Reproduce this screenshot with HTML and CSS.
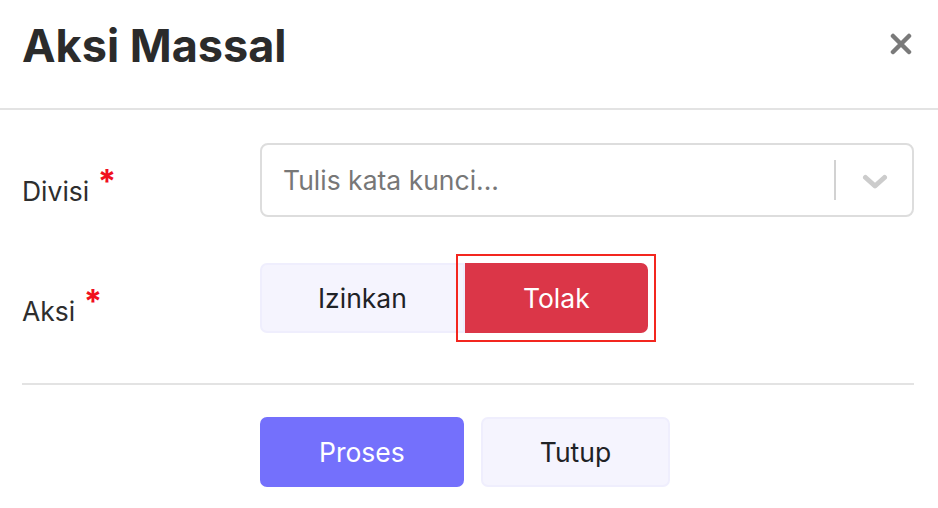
FILE: index.html
```html
<!DOCTYPE html>
<html lang="id">
<head>
<meta charset="utf-8">
<title>Aksi Massal</title>
<link rel="stylesheet" href="styles.css">
</head>
<body>
<div class="modal">
  <header class="modal-header">
    <h1 class="modal-title">Aksi Massal</h1>
    <button class="close" aria-label="Tutup">
      <svg width="22" height="22" viewBox="0 0 22 22"><path d="M3 3L19 19M19 3L3 19" stroke="#7a7a7a" stroke-width="4.5" stroke-linecap="round" fill="none"/></svg>
    </button>
  </header>
  <div class="modal-body">
    <div class="form-row">
      <label class="label">Divisi <span class="req">*</span></label>
      <div class="select">
        <span class="placeholder">Tulis kata kunci...</span>
        <span class="sep"></span>
        <span class="chev">
          <svg width="26" height="16" viewBox="0 0 26 16"><path d="M3.5 3.5L13 12L22.5 3.5" stroke="#cccccc" stroke-width="5" stroke-linecap="round" stroke-linejoin="round" fill="none"/></svg>
        </span>
      </div>
    </div>
    <div class="form-row row-aksi">
      <label class="label">Aksi <span class="req">*</span></label>
      <div class="btn-group">
        <button class="btn btn-light grp-left">Izinkan</button>
        <button class="btn btn-danger grp-right focused">Tolak</button>
      </div>
    </div>
    <div class="divider"></div>
    <div class="footer">
      <button class="btn btn-primary">Proses</button>
      <button class="btn btn-light">Tutup</button>
    </div>
  </div>
</div>
</body>
</html>
```

FILE: styles.css
```css
* { box-sizing: border-box; }
html, body { margin: 0; padding: 0; background: #fff; }
body { font-family: Inter, "Noto Sans", "Liberation Sans", sans-serif; color: #2b2b2b; }

.modal { width: 938px; }

.modal-header {
  height: 110px;
  display: flex;
  align-items: flex-start;
  justify-content: space-between;
  padding: 0 22px;
  border-bottom: 2px solid #e3e3e3;
}
.modal-title {
  margin: 18px 0 0 0;
  font-size: 45px;
  font-weight: 700;
  line-height: 56px;
  color: #2b2b2b;
}
.close {
  margin: 33px 4px 0 0;
  padding: 0;
  border: 0;
  background: none;
  width: 22px;
  height: 22px;
  display: flex;
}

.modal-body { padding: 33px 24px 0 22px; }

.form-row { display: flex; align-items: flex-start; }
.row-aksi { margin-top: 46px; }

.label {
  width: 238px;
  flex: none;
  font-size: 26.5px;
  line-height: 40px;
  padding-top: 28px;
  color: #2e2e2e;
}
.req {
  color: #f0101e;
  font-weight: 700;
  font-size: 33px;
  line-height: 0;
  vertical-align: 8px;
  margin-left: 1px;
}

.select {
  flex: 1;
  height: 74px;
  border: 2px solid #dddddd;
  border-radius: 8px;
  display: flex;
  align-items: center;
  padding-left: 21px;
}
.placeholder {
  flex: 1;
  font-size: 26.5px;
  color: #777777;
}
.sep {
  width: 2px;
  height: 40px;
  background: #d2d2d2;
  margin-right: 2px;
}
.chev {
  width: 74px;
  display: flex;
  justify-content: center;
  padding-top: 3px;
}

.btn-group { display: flex; }

.btn {
  font-family: inherit;
  font-size: 26.5px;
  height: 70px;
  padding: 0 57px;
  border-radius: 7px;
  border: 2px solid transparent;
  cursor: pointer;
}
.btn-group .btn { padding: 0 56px; }
.btn-light {
  background: #f5f4fe;
  border-color: #efeefd;
  color: #1f2226;
}
.btn-danger {
  background: #db3648;
  border-color: #db3648;
  color: #fff;
}
.btn-primary {
  background: #7470fc;
  border-color: #7470fc;
  color: #fff;
}
.grp-left { border-top-right-radius: 0; border-bottom-right-radius: 0; }
.grp-right { border-top-left-radius: 0; border-bottom-left-radius: 0; }
.focused { position: relative; }
.focused::after {
  content: "";
  position: absolute;
  top: -11px;
  bottom: -11px;
  left: -11px;
  right: -10px;
  border: 2px solid #f3261f;
  pointer-events: none;
}

.divider {
  margin-top: 50px;
  height: 2px;
  background: #e3e3e3;
}

.footer {
  display: flex;
  gap: 17px;
  padding-left: 238px;
  margin-top: 32px;
}
```
